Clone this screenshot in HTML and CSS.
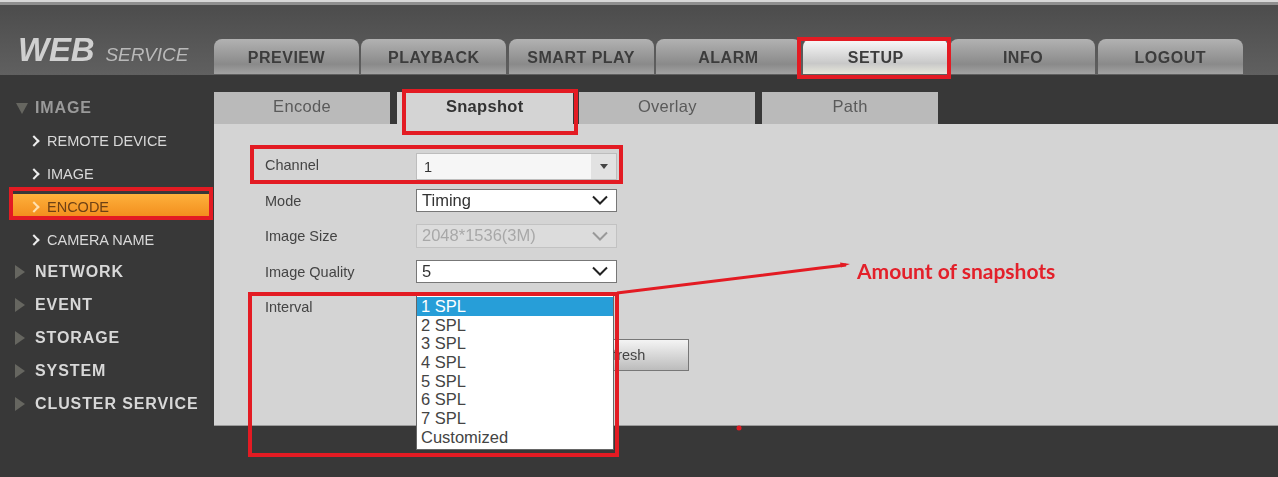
FILE: index.html
```html
<!DOCTYPE html>
<html lang="en">
<head>
    <meta charset="UTF-8">
    <title>WEB SERVICE</title>
    <link rel="stylesheet" href="styles.css">
</head>
<body>
    <div class="page">
        <header class="top-bar">
            <div class="logo"><span class="logo-web">WEB</span><span class="logo-service">SERVICE</span></div>
            <nav class="main-tabs">
                <a class="main-tab">PREVIEW</a>
                <a class="main-tab">PLAYBACK</a>
                <a class="main-tab">SMART PLAY</a>
                <a class="main-tab">ALARM</a>
                <a class="main-tab active">SETUP</a>
                <a class="main-tab">INFO</a>
                <a class="main-tab">LOGOUT</a>
            </nav>
        </header>

        <div class="main">
            <aside class="sidebar">
                <div class="menu-group open"><i class="tri-down"></i>IMAGE</div>
                <div class="menu-item"><i class="chev"></i>REMOTE DEVICE</div>
                <div class="menu-item"><i class="chev"></i>IMAGE</div>
                <div class="menu-item active"><span class="menu-bar"><i class="chev"></i>ENCODE</span></div>
                <div class="menu-item"><i class="chev"></i>CAMERA NAME</div>
                <div class="menu-group"><i class="tri-right"></i>NETWORK</div>
                <div class="menu-group"><i class="tri-right"></i>EVENT</div>
                <div class="menu-group"><i class="tri-right"></i>STORAGE</div>
                <div class="menu-group"><i class="tri-right"></i>SYSTEM</div>
                <div class="menu-group"><i class="tri-right"></i>CLUSTER SERVICE</div>
            </aside>

            <section class="content">
                <div class="sub-tabs">
                    <a class="sub-tab">Encode</a>
                    <a class="sub-tab active">Snapshot</a>
                    <a class="sub-tab">Overlay</a>
                    <a class="sub-tab">Path</a>
                </div>
                <div class="panel">
                    <div class="form-row">
                        <label>Channel</label>
                        <div class="combo">
                            <span>1</span>
                            <span class="combo-btn"><i class="combo-arrow"></i></span>
                        </div>
                    </div>
                    <div class="form-row">
                        <label>Mode</label>
                        <div class="select"><span>Timing</span>
                            <svg width="16" height="10" viewBox="0 0 16 10"><path d="M1 1.5l7 7 7-7" /></svg>
                        </div>
                    </div>
                    <div class="form-row">
                        <label>Image Size</label>
                        <div class="select disabled"><span>2048*1536(3M)</span>
                            <svg width="16" height="10" viewBox="0 0 16 10"><path d="M1 1.5l7 7 7-7" /></svg>
                        </div>
                    </div>
                    <div class="form-row">
                        <label>Image Quality</label>
                        <div class="select"><span>5</span>
                            <svg width="16" height="10" viewBox="0 0 16 10"><path d="M1 1.5l7 7 7-7" /></svg>
                        </div>
                    </div>
                    <div class="form-row">
                        <label>Interval</label>
                        <div class="dropdown-anchor">
                            <ul class="dropdown">
                                <li class="selected">1 SPL</li>
                                <li>2 SPL</li>
                                <li>3 SPL</li>
                                <li>4 SPL</li>
                                <li>5 SPL</li>
                                <li>6 SPL</li>
                                <li>7 SPL</li>
                                <li>Customized</li>
                            </ul>
                        </div>
                    </div>
                    <div class="form-actions">
                        <button class="btn">Refresh</button>
                    </div>
                </div>
            </section>
        </div>

        <!-- annotations drawn over the screenshot -->
        <div class="mark mark-setup"></div>
        <div class="mark mark-snapshot"></div>
        <div class="mark mark-channel"></div>
        <div class="mark mark-encode"></div>
        <div class="mark mark-interval"></div>
        <svg class="callout-line" width="1278" height="477" viewBox="0 0 1278 477">
            <path class="callout-stroke" d="M617 293L820 268L846 265" />
            <path class="callout-head" d="M840 262.500L850 264L841 267.500Z" />
            <circle class="callout-dot" cx="739" cy="428" r="2.500" />
        </svg>
        <div class="callout-text">Amount of snapshots</div>
    </div>
</body>
</html>
```

FILE: styles.css
```css
* {
    box-sizing: border-box;
}
html, body {
    margin: 0;
    height: 100%;
    overflow: hidden;
}
body {
    font-family: "Liberation Sans", Arial, sans-serif;
    background-color: #383838;
}
.page {
    position: relative;
    width: 1278px;
    height: 477px;
    overflow: hidden;
    filter: blur(0.35px);
}

/* top bar */
.top-bar {
    display: flex;
    height: 75px;
    padding-top: 39px;
    border-top: 5px solid #8f8f8f;
    background: linear-gradient(#4c4c4c, #606060);
    box-shadow: inset 0 0 0 transparent;
}
.top-bar::before {
    content: "";
    position: absolute;
    top: 0;
    left: 0;
    right: 0;
    height: 2px;
    background-color: #d8d8d8;
}
.top-bar {
    padding-top: 34px;
}
.logo {
    flex: 0 0 214px;
    display: flex;
    align-items: baseline;
    padding-left: 18px;
    height: 22px;
    font-style: italic;
}
.logo-web {
    font-size: 33px;
    font-weight: bold;
    line-height: 22px;
    letter-spacing: -0.2px;
    color: #d0d0d0;
}
.logo-service {
    margin-left: 11px;
    font-size: 19px;
    color: #b9b9b9;
}
.main-tabs {
    display: flex;
    gap: 2.3px;
}
.main-tab {
    display: flex;
    align-items: center;
    justify-content: center;
    width: 145px;
    height: 35px;
    padding-top: 2px;
    border-radius: 8px 8px 0 0;
    background: linear-gradient(#b2b2b2, #8a8a8a 72%, #a2a2a2);
    color: #3c3c3c;
    font-size: 16px;
    font-weight: bold;
    letter-spacing: 0.5px;
}
.main-tab.active {
    background: linear-gradient(#fbfbfb, #c8c8c8 70%, #e8e8dc);
}

/* left menu */
.main {
    display: flex;
    height: 402px;
}
.sidebar {
    flex: 0 0 214px;
    padding-top: 17px;
}
.menu-group, .menu-item {
    display: flex;
    align-items: center;
    height: 32.8px;
    color: #d8d8d8;
}
.menu-group {
    padding-left: 15px;
    font-size: 16px;
    font-weight: bold;
    letter-spacing: 0.9px;
}
.menu-group.open {
    color: #9a9a9a;
}
.tri-right {
    width: 0;
    height: 0;
    margin-right: 10px;
    border-left: 10px solid #666660;
    border-top: 7px solid transparent;
    border-bottom: 7px solid transparent;
}
.tri-down {
    width: 0;
    height: 0;
    margin-right: 7px;
    margin-left: 1px;
    border-top: 11px solid #666660;
    border-left: 6px solid transparent;
    border-right: 6px solid transparent;
}
.menu-item {
    padding-left: 33px;
    font-size: 14.500px;
}
.chev {
    width: 8px;
    height: 8px;
    margin-right: 9px;
    margin-left: -3px;
    border-top: 2px solid #eee;
    border-right: 2px solid #eee;
    transform: rotate(45deg);
}
.menu-item.active {
    padding-left: 13px;
}
.menu-bar {
    display: flex;
    align-items: center;
    width: 197px;
    height: 25px;
    padding-left: 20px;
    background: linear-gradient(#fdb13c, #f28a1a);
    color: #6e4115;
}
.menu-bar .chev {
    border-color: #ffe0b0;
}

/* sub tabs */
.content {
    flex: 1;
    padding-top: 17px;
}
.sub-tabs {
    display: flex;
    gap: 6.700px;
    height: 32px;
}
.sub-tab {
    display: flex;
    align-items: center;
    justify-content: center;
    width: 176px;
    padding-bottom: 4px;
    background-color: #bababa;
    color: #5a5a5a;
    font-size: 16.500px;
    letter-spacing: 0.3px;
}
.sub-tab.active {
    background-color: #d4d4d4;
    color: #333;
    font-weight: bold;
}

/* form panel */
.panel {
    height: 302px;
    padding: 29px 0 0 51px;
    background-color: #d4d4d4;
    border-bottom: 1px solid #9a9a9a;
}
.form-row {
    display: flex;
    height: 35.500px;
}
.form-row label {
    width: 151px;
    color: #444;
    font-size: 14.500px;
    line-height: 25px;
}
.select, .combo {
    display: flex;
    align-items: center;
    justify-content: space-between;
    width: 201px;
}
.select {
    height: 23.500px;
    padding: 0 8px 0 5px;
    border: 1px solid #777;
    background-color: #fff;
    color: #333;
    font-size: 16.500px;
}
.select svg {
    fill: none;
    stroke: #222;
    stroke-width: 2;
}
.select.disabled {
    border-color: #c2c2c2;
    background-color: #dcdcdc;
    color: #a8a8a8;
}
.select.disabled svg {
    stroke: #999;
}
.combo {
    height: 27px;
    padding-left: 7px;
    border: 1px solid #bdbdbd;
    background-color: #f6f6f6;
    color: #333;
    font-size: 14.500px;
}
.combo-btn {
    display: flex;
    align-items: center;
    justify-content: center;
    width: 25px;
    height: 100%;
    background-color: #e2e2e2;
}
.combo-arrow {
    width: 0;
    height: 0;
    border-top: 5px solid #444;
    border-left: 4px solid transparent;
    border-right: 4px solid transparent;
}
.dropdown-anchor {
    position: relative;
    width: 201px;
    height: 23px;
}
.dropdown {
    position: absolute;
    z-index: 2;
    top: 0;
    left: 0;
    width: 198px;
    height: 155px;
    margin: 0;
    padding: 1px 0 0;
    list-style: none;
    border: 1px solid #666;
    background-color: #fff;
    color: #444;
    font-size: 16.500px;
}
.dropdown li {
    height: 18.700px;
    padding-left: 4px;
    line-height: 18px;
}
.dropdown li.selected {
    background-color: #279ed8;
    color: #fff;
}
.form-actions {
    padding: 8.500px 0 0 286px;
}
.btn {
    display: block;
    width: 138px;
    height: 32px;
    border: 1px solid #777;
    background: linear-gradient(#f4f4f4, #bcbcbc);
    color: #444;
    font-family: inherit;
    font-size: 14.500px;
}

/* red annotation boxes */
.mark {
    position: absolute;
    z-index: 3;
    border: 4px solid #e31b23;
}
.mark-setup {
    left: 797px;
    top: 37px;
    width: 154px;
    height: 42px;
}
.mark-snapshot {
    left: 402px;
    top: 89px;
    width: 176px;
    height: 46px;
}
.mark-channel {
    left: 250px;
    top: 145px;
    width: 373px;
    height: 39px;
}
.mark-encode {
    left: 9px;
    top: 187px;
    width: 204px;
    height: 33px;
}
.mark-interval {
    left: 248px;
    top: 292px;
    width: 371px;
    height: 165px;
}
.callout-line {
    position: absolute;
    z-index: 3;
    top: 0;
    left: 0;
}
.callout-stroke {
    fill: none;
    stroke: #e31b23;
    stroke-width: 3;
}
.callout-head, .callout-dot {
    fill: #e31b23;
}
.callout-text {
    position: absolute;
    z-index: 3;
    left: 857px;
    top: 257px;
    color: #e3202a;
    font-family: Lato, sans-serif;
    font-size: 21px;
    font-weight: bold;
    line-height: 28px;
}
```
